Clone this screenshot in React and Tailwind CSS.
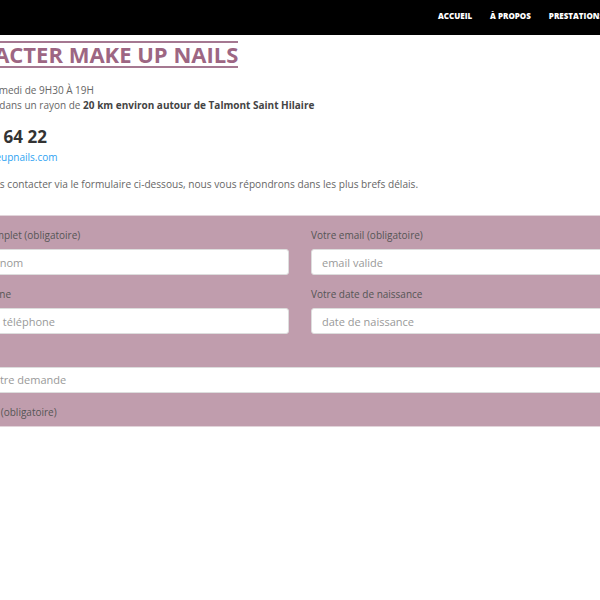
export default function App() {
  const nav = ["Accueil", "À propos", "Prestations", "Contact"];
  const inputClass =
    "mt-[7px] block w-full h-[26px] rounded-[3px] bg-white border border-[#ddd] px-[10px] text-[11px] placeholder:text-[#999] outline-none";

  return (
    <div className="w-[600px] h-[600px] overflow-hidden bg-white font-['Open_Sans',sans-serif] text-[#666]">
      <header className="h-[35px] bg-black flex items-start pl-[438px] pt-[10px] whitespace-nowrap">
        <nav className="flex gap-[18px] text-[8px] font-extrabold uppercase text-white">
          {nav.map((item) => (
            <span key={item}>{item}</span>
          ))}
        </nav>
      </header>

      <main className="-ml-[68px] w-[736px]">
        <h1 className="mt-[6px] inline-block border-y-2 border-[#a57891] text-[22px] leading-[23px] font-bold text-[#9d6683] whitespace-nowrap">
          CONTACTER MAKE UP NAILS
        </h1>

        <div className="mt-[14px] text-[10px] leading-[15px] whitespace-nowrap">
          <p>Du lundi au samedi de 9H30 À 19H</p>
          <p>
            Je me déplace dans un rayon de{" "}
            <strong className="font-bold text-[#444]">20 km environ autour de Talmont Saint Hilaire</strong>
          </p>
        </div>

        <p className="mt-[13px] text-[17px] leading-[22px] font-bold text-[#333] whitespace-nowrap">06 70 12 64 22</p>
        <p className="mt-[1px] text-[10px] leading-[16px] text-[#2ea3f2] whitespace-nowrap">contact@makeupnails.com</p>

        <p className="mt-[11px] text-[10.15px] leading-[16px] whitespace-nowrap">
          <span className="tracking-[0.3px]">Prière de nou</span>s contacter via le formulaire ci-dessous, nous vous
          répondrons dans les plus brefs délais.
        </p>

        <form className="mt-[23px] bg-[#c09dad] border-t border-[#e2d4da] border-b pb-[7px] text-[10px] leading-[14px] text-[#555]">
          <div className="grid grid-cols-2 gap-x-[22px] pt-[12px]">
            <label className="block">
              <span className="block whitespace-nowrap">Votre nom complet (obligatoire)</span>
              <input placeholder="Prénom et nom" className={inputClass} />
            </label>
            <label className="block">
              <span className="block whitespace-nowrap">Votre email (obligatoire)</span>
              <input placeholder="email valide" className={inputClass} />
            </label>
            <label className="block mt-[12px]">
              <span className="block whitespace-nowrap">
                <span className="tracking-[0.3px]">Votre télépho</span>ne
              </span>
              <input placeholder="Saisir votre téléphone" className={inputClass} />
            </label>
            <label className="block mt-[12px]">
              <span className="block whitespace-nowrap">Votre date de naissance</span>
              <input placeholder="date de naissance" className={inputClass} />
            </label>
          </div>

          <label className="block mt-[12px]">
            <span className="block whitespace-nowrap">Message</span>
            <textarea
              rows={1}
              placeholder="Précisez votre demande"
              className="mt-[7px] block w-full h-[26px] resize-none rounded-[3px] bg-white border border-[#ddd] px-[10px] py-[4px] text-[11px] leading-[16px] placeholder:text-[#999] outline-none"
            />
          </label>

          <span className="block mt-[12px] whitespace-nowrap">Votre réponse (obligatoire)</span>
        </form>
      </main>
    </div>
  );
}
